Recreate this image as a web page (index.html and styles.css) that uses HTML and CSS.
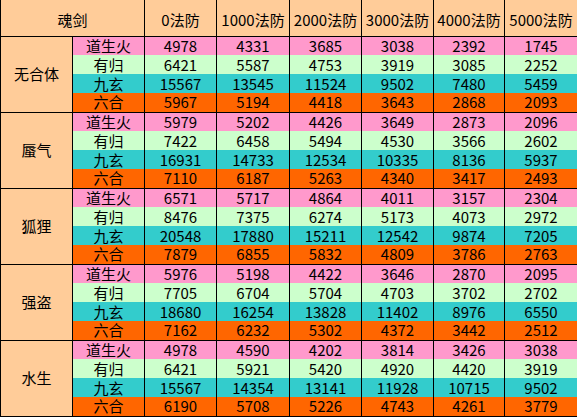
FILE: index.html
```html
<!DOCTYPE html>
<html lang="zh-CN">
<head>
<meta charset="utf-8">
<link rel="stylesheet" href="styles.css">
</head>
<body>
<table class="sheet">
<colgroup>
<col class="c72"><col class="c72"><col class="c72"><col class="c73"><col class="c72"><col class="c72"><col class="c71"><col class="c73">
</colgroup>
<thead>
<tr class="head"><th colspan="2">魂剑</th><th>0法防</th><th>1000法防</th><th>2000法防</th><th>3000法防</th><th>4000法防</th><th>5000法防</th></tr>
</thead>
<tbody>
<tr class="pink"><td class="grp" rowspan="4">无合体</td><td>道生火</td><td>4978</td><td>4331</td><td>3685</td><td>3038</td><td>2392</td><td>1745</td></tr>
<tr class="green"><td>有归</td><td>6421</td><td>5587</td><td>4753</td><td>3919</td><td>3085</td><td>2252</td></tr>
<tr class="teal"><td>九玄</td><td>15567</td><td>13545</td><td>11524</td><td>9502</td><td>7480</td><td>5459</td></tr>
<tr class="orange last"><td>六合</td><td>5967</td><td>5194</td><td>4418</td><td>3643</td><td>2868</td><td>2093</td></tr>

<tr class="pink"><td class="grp" rowspan="4">蜃气</td><td>道生火</td><td>5979</td><td>5202</td><td>4426</td><td>3649</td><td>2873</td><td>2096</td></tr>
<tr class="green"><td>有归</td><td>7422</td><td>6458</td><td>5494</td><td>4530</td><td>3566</td><td>2602</td></tr>
<tr class="teal"><td>九玄</td><td>16931</td><td>14733</td><td>12534</td><td>10335</td><td>8136</td><td>5937</td></tr>
<tr class="orange last"><td>六合</td><td>7110</td><td>6187</td><td>5263</td><td>4340</td><td>3417</td><td>2493</td></tr>

<tr class="pink"><td class="grp" rowspan="4">狐狸</td><td>道生火</td><td>6571</td><td>5717</td><td>4864</td><td>4011</td><td>3157</td><td>2304</td></tr>
<tr class="green"><td>有归</td><td>8476</td><td>7375</td><td>6274</td><td>5173</td><td>4073</td><td>2972</td></tr>
<tr class="teal"><td>九玄</td><td>20548</td><td>17880</td><td>15211</td><td>12542</td><td>9874</td><td>7205</td></tr>
<tr class="orange last"><td>六合</td><td>7879</td><td>6855</td><td>5832</td><td>4809</td><td>3786</td><td>2763</td></tr>

<tr class="pink"><td class="grp" rowspan="4">强盗</td><td>道生火</td><td>5976</td><td>5198</td><td>4422</td><td>3646</td><td>2870</td><td>2095</td></tr>
<tr class="green"><td>有归</td><td>7705</td><td>6704</td><td>5704</td><td>4703</td><td>3702</td><td>2702</td></tr>
<tr class="teal"><td>九玄</td><td>18680</td><td>16254</td><td>13828</td><td>11402</td><td>8976</td><td>6550</td></tr>
<tr class="orange last"><td>六合</td><td>7162</td><td>6232</td><td>5302</td><td>4372</td><td>3442</td><td>2512</td></tr>

<tr class="pink"><td class="grp" rowspan="4">水生</td><td>道生火</td><td>4978</td><td>4590</td><td>4202</td><td>3814</td><td>3426</td><td>3038</td></tr>
<tr class="green"><td>有归</td><td>6421</td><td>5921</td><td>5420</td><td>4920</td><td>4420</td><td>3919</td></tr>
<tr class="teal"><td>九玄</td><td>15567</td><td>14354</td><td>13141</td><td>11928</td><td>10715</td><td>9502</td></tr>
<tr class="orange last"><td>六合</td><td>6190</td><td>5708</td><td>5226</td><td>4743</td><td>4261</td><td>3779</td></tr>
</tbody>
</table>
</body>
</html>
```
FILE: styles.css
```css
html, body {
  margin: 0;
  padding: 0;
  background: #ffffff;
}
.sheet {
  border-collapse: collapse;
  table-layout: fixed;
  width: 577px;
  font-family: "Noto Sans CJK SC", "Noto Sans", sans-serif;
  font-size: 15px;
  color: #000;
  border-left: 1px solid #000;
  border-right: 1px solid #000;
  border-bottom: 1px solid #000;
}
.c72 { width: 72px; }
.c73 { width: 73px; }
.c71 { width: 71px; }
.sheet th, .sheet td {
  padding: 0;
  text-align: center;
  vertical-align: middle;
  border-left: 1px solid #000;
  border-right: 1px solid #000;
  line-height: 18px;
  white-space: nowrap;
}
.head th {
  height: 36px;
  box-sizing: border-box;
  padding-top: 5px;
  background: #ffcc99;
  font-weight: normal;
  border-bottom: 1px solid #000;
}
tbody tr { height: 19px; }
tbody td { padding-top: 1px; }
.grp {
  background: #ffcc99;
  border-bottom: 1px solid #000;
}
.last td { border-bottom: 1px solid #000; }
.pink td { background: #ff99cc; }
.green td { background: #ccffcc; }
.teal td { background: #33cccc; }
.orange td { background: #ff6600; }
.pink td.grp { background: #ffcc99; }
```
